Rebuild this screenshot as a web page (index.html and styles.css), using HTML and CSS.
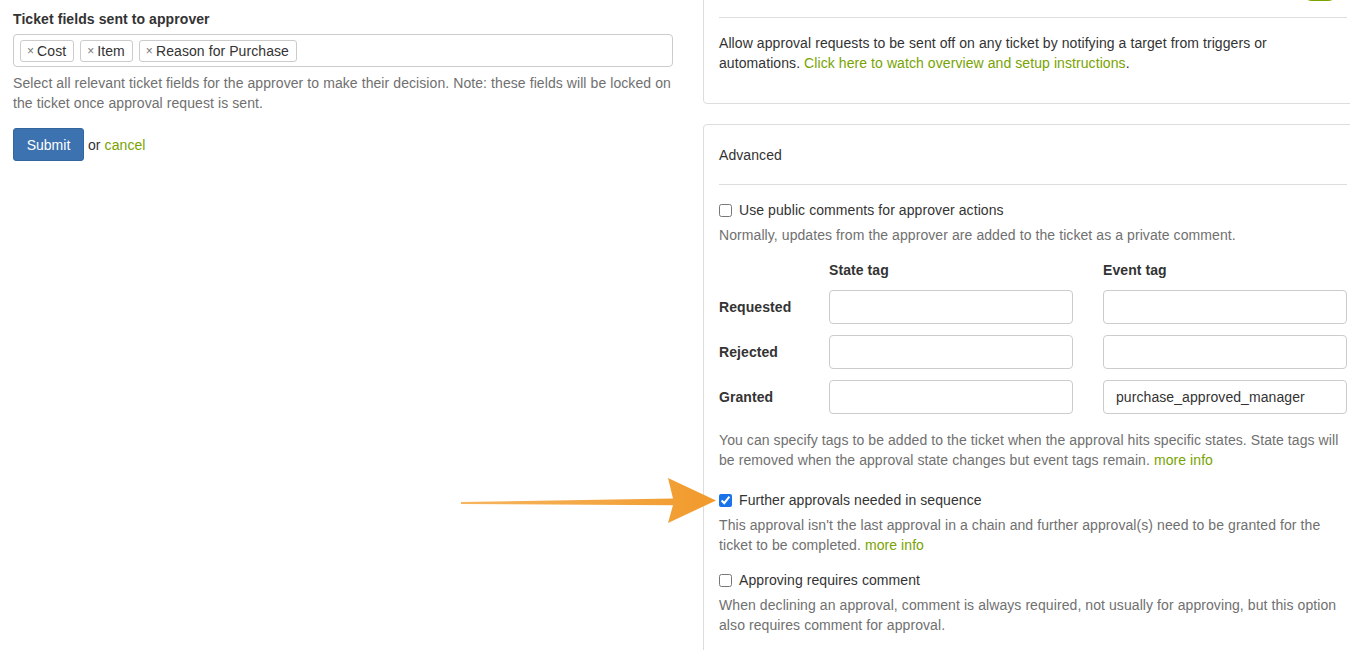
FILE: index.html
```html
<!DOCTYPE html>
<html>
<head>
<meta charset="utf-8">
<link rel="stylesheet" href="styles.css">
</head>
<body>
<div class="page">
  <div class="left">
    <div class="field-label">Ticket fields sent to approver</div>
    <div class="tag-box">
      <span class="tag"><span class="x">×</span>Cost</span>
      <span class="tag"><span class="x">×</span>Item</span>
      <span class="tag"><span class="x">×</span>Reason for Purchase</span>
    </div>
    <p class="help">Select all relevant ticket fields for the approver to make their decision. Note: these fields will be locked on the ticket once approval request is sent.</p>
    <div class="actions">
      <button class="btn-submit">Submit</button>
      <span class="or">or</span>
      <a class="link" href="#">cancel</a>
    </div>
  </div>

  <div class="right">
    <div class="panel">
      <div class="panel-head"><span class="toggle"></span></div>
      <div class="panel-body first">
        <p class="text">Allow approval requests to be sent off on any ticket by notifying a target from triggers or automations. <a class="link" href="#">Click here to watch overview and setup instructions</a>.</p>
      </div>
    </div>

    <div class="panel second">
      <div class="panel-title">Advanced</div>
      <div class="panel-body">
        <label class="check"><input type="checkbox"> Use public comments for approver actions</label>
        <p class="help">Normally, updates from the approver are added to the ticket as a private comment.</p>

        <div class="tag-grid">
          <div></div>
          <div class="col-head">State tag</div>
          <div class="col-head">Event tag</div>

          <div class="row-label">Requested</div>
          <input class="text-input" type="text">
          <input class="text-input" type="text">

          <div class="row-label">Rejected</div>
          <input class="text-input" type="text">
          <input class="text-input" type="text">

          <div class="row-label">Granted</div>
          <input class="text-input" type="text">
          <input class="text-input" type="text" value="purchase_approved_manager">
        </div>

        <p class="help tags-help">You can specify tags to be added to the ticket when the approval hits specific states. State tags will be removed when the approval state changes but event tags remain. <a class="link" href="#">more info</a></p>

        <label class="check spaced"><input type="checkbox" checked> Further approvals needed in sequence</label>
        <p class="help">This approval isn't the last approval in a chain and further approval(s) need to be granted for the ticket to be completed. <a class="link" href="#">more info</a></p>

        <label class="check spaced2"><input type="checkbox"> Approving requires comment</label>
        <p class="help">When declining an approval, comment is always required, not usually for approving, but this option also requires comment for approval.</p>
      </div>
    </div>
  </div>
</div>

<svg class="arrow" width="270" height="50" viewBox="0 0 270 50">
  <defs>
    <linearGradient id="ag" x1="0" y1="0" x2="1" y2="0">
      <stop offset="0" stop-color="#f6b55e"/>
      <stop offset="1" stop-color="#f19a2c"/>
    </linearGradient>
  </defs>
  <path d="M0 24 L212 20.6 L207 0 L255 22.5 L207 45 L212 27.2 L0 26 Z" fill="url(#ag)"/>
</svg>
</body>
</html>
```

FILE: styles.css
```css
html, body {
  margin: 0;
  padding: 0;
  overflow: hidden;
  background: #fff;
}
body {
  font-family: "Liberation Sans", Arial, Helvetica, sans-serif;
  font-size: 14px;
  line-height: 20px;
  letter-spacing: 0.08px;
  color: #333;
  position: relative;
  width: 1350px;
  height: 650px;
}
.page {
  display: flex;
  gap: 30px;
  align-items: flex-start;
}
.left {
  width: 660px;
  flex: none;
  padding: 9px 0 0 13px;
}
.field-label {
  font-weight: bold;
  margin-bottom: 5px;
}
.tag-box {
  border: 1px solid #ccc;
  border-radius: 4px;
  height: 31px;
  box-sizing: content-box;
  padding: 0 6px;
  display: flex;
  align-items: center;
  gap: 6px;
}
.tag {
  display: inline-flex;
  align-items: center;
  height: 20px;
  border: 1px solid #ccc;
  border-radius: 3px;
  padding: 0 7px 0 6px;
  color: #333;
  line-height: 20px;
}
.tag .x {
  color: #777;
  font-size: 12px;
  margin-right: 3px;
}
.help {
  margin: 6px 0 0;
  color: #707070;
}
.actions {
  margin-top: 15px;
  display: flex;
  align-items: center;
}
.btn-submit {
  width: 71px;
  height: 33px;
  background: #3c72b0;
  border: 1px solid #33659f;
  border-radius: 3px;
  color: #fff;
  font-family: inherit;
  font-size: 14px;
  padding: 0;
}
.or {
  margin-left: 4px;
  margin-right: 4px;
}
.link {
  color: #78a300;
  text-decoration: none;
}

.right {
  width: 660px;
  flex: none;
  margin-top: -30px;
}
.panel {
  border: 1px solid #ddd;
  border-radius: 4px;
  padding: 0 15px;
}
.panel-head {
  padding: 10px 0 16px;
  border-bottom: 1px solid #ddd;
  display: flex;
  justify-content: flex-end;
}
.toggle {
  width: 36px;
  height: 20px;
  margin-right: 9px;
  background: #78a300;
  border-radius: 10px;
}
.panel-body.first {
  padding: 15px 0 30px;
}
.text {
  margin: 0;
  max-width: 625px;
}
.panel.second {
  margin-top: 20px;
  height: 700px;
}
.panel-title {
  padding: 20px 0 19px;
  border-bottom: 1px solid #ddd;
}
.panel-body {
  padding-top: 15px;
}
.check {
  display: flex;
  align-items: center;
  gap: 7px;
}
.check input {
  margin: 0;
  width: 13px;
  height: 13px;
  accent-color: #1a73e8;
}
.panel-body .help {
  margin-top: 5px;
}
.tag-grid {
  margin-top: 15px;
  display: grid;
  grid-template-columns: 80px 244px 244px;
  column-gap: 30px;
  row-gap: 11px;
  grid-template-rows: 19px 34px 34px 34px;
  align-items: center;
}
.col-head, .row-label {
  font-weight: bold;
}
.text-input {
  box-sizing: border-box;
  height: 34px;
  width: 244px;
  border: 1px solid #ccc;
  border-radius: 4px;
  padding: 0 12px;
  font-family: inherit;
  font-size: 14px;
  letter-spacing: 0.08px;
  color: #333;
  margin: 0;
}
.panel-body .tags-help {
  margin-top: 16px;
}
.check.spaced {
  margin-top: 20px;
}
.check.spaced2 {
  margin-top: 15px;
}
.arrow {
  position: absolute;
  left: 461px;
  top: 478px;
}
```
